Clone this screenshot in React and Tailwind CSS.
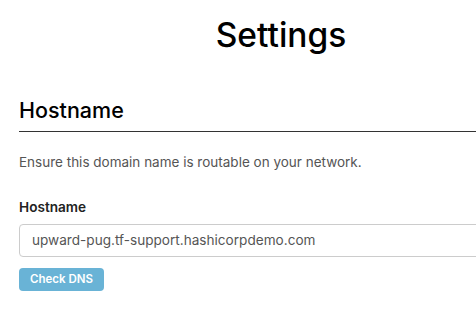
export default function App() {
  return (
    <div className="w-[476px] h-[327px] overflow-hidden bg-white" style={{ fontFamily: 'Inter, "Liberation Sans", sans-serif' }}>
      <div className="px-[19px]">
        <div className="w-[524px]">
          <h1 className="mt-[14px] text-center text-[33.5px] leading-[42px] font-medium text-black">Settings</h1>
          <h2 className="mt-[42px] text-[21.5px] leading-[25px] font-medium text-black pb-[8px] border-b border-[#333]">Hostname</h2>
          <p className="mt-[21px] text-[13.5px] leading-[18px] text-[#555]">Ensure this domain name is routable on your network.</p>
          <label className="block mt-[28px] text-[13.6px] leading-[17px] font-semibold text-[#222]">Hostname</label>
          <div className="mt-[8px] h-[33px] border border-[#ccc] rounded-[4px] flex items-center px-[12px] text-[13.6px] text-[#555]">
            upward-pug.tf-support.hashicorpdemo.com
          </div>
          <button className="mt-[11px] w-[85px] h-[23px] rounded-[4px] bg-[#69b3d6] text-white text-[11.5px] font-semibold flex items-center justify-center">Check DNS</button>
        </div>
      </div>
    </div>
  );
}
